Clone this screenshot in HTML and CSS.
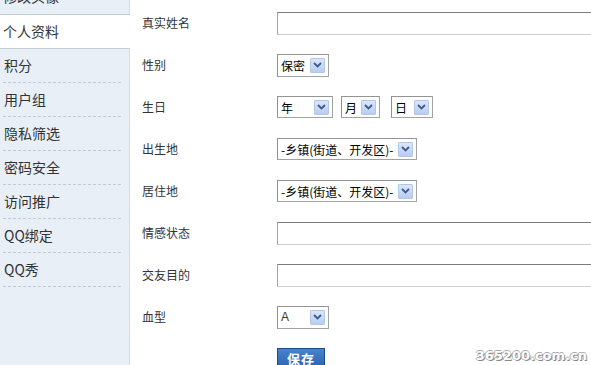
FILE: index.html
```html
<!DOCTYPE html>
<html lang="zh-CN">
<head>
    <meta charset="utf-8">
    <title>个人资料</title>
    <link rel="stylesheet" href="styles.css">
</head>

<body>
    <aside class="side">
        <ul class="menu">
            <li class="top">修改头像</li>
            <li class="valgt">个人资料</li>
            <li>积分</li>
            <li>用户组</li>
            <li>隐私筛选</li>
            <li>密码安全</li>
            <li>访问推广</li>
            <li>QQ绑定</li>
            <li>QQ秀</li>
        </ul>
    </aside>

    <main class="form">
        <div class="row">
            <span class="label">真实姓名</span>
            <input class="text" type="text">
        </div>
        <div class="row">
            <span class="label">性别</span>
            <div class="select w52 tall"><span class="val">保密</span><span class="arrow"><svg width="9" height="6" viewBox="0 0 9 6"><path d="M1 1 L4.5 4.5 L8 1" fill="none" stroke="#3f5a8c" stroke-width="1.8"/></svg></span></div>
        </div>
        <div class="row">
            <span class="label">生日</span>
            <div class="select w56 gap8"><span class="val">年</span><span class="arrow"><svg width="9" height="6" viewBox="0 0 9 6"><path d="M1 1 L4.5 4.5 L8 1" fill="none" stroke="#3f5a8c" stroke-width="1.8"/></svg></span></div>
            <div class="select w39 gap11"><span class="val">月</span><span class="arrow"><svg width="9" height="6" viewBox="0 0 9 6"><path d="M1 1 L4.5 4.5 L8 1" fill="none" stroke="#3f5a8c" stroke-width="1.8"/></svg></span></div>
            <div class="select w42"><span class="val">日</span><span class="arrow"><svg width="9" height="6" viewBox="0 0 9 6"><path d="M1 1 L4.5 4.5 L8 1" fill="none" stroke="#3f5a8c" stroke-width="1.8"/></svg></span></div>
        </div>
        <div class="row">
            <span class="label">出生地</span>
            <div class="select w140"><span class="val">-乡镇(街道、开发区)-</span><span class="arrow"><svg width="9" height="6" viewBox="0 0 9 6"><path d="M1 1 L4.5 4.5 L8 1" fill="none" stroke="#3f5a8c" stroke-width="1.8"/></svg></span></div>
        </div>
        <div class="row">
            <span class="label">居住地</span>
            <div class="select w140"><span class="val">-乡镇(街道、开发区)-</span><span class="arrow"><svg width="9" height="6" viewBox="0 0 9 6"><path d="M1 1 L4.5 4.5 L8 1" fill="none" stroke="#3f5a8c" stroke-width="1.8"/></svg></span></div>
        </div>
        <div class="row">
            <span class="label">情感状态</span>
            <input class="text" type="text">
        </div>
        <div class="row">
            <span class="label">交友目的</span>
            <input class="text" type="text">
        </div>
        <div class="row">
            <span class="label">血型</span>
            <div class="select w52 tall"><span class="val latin">A</span><span class="arrow"><svg width="9" height="6" viewBox="0 0 9 6"><path d="M1 1 L4.5 4.5 L8 1" fill="none" stroke="#3f5a8c" stroke-width="1.8"/></svg></span></div>
        </div>
        <div class="row">
            <span class="label"></span>
            <button class="save">保存</button>
        </div>
    </main>

    <div class="mark">365200.com.cn</div>
</body>
</html>
```

FILE: styles.css
```css
html,
body {
    margin: 0;
    height: 100%;
    overflow: hidden;
}

body {
    display: flex;
    background-color: #fff;
    font-family: "Noto Sans CJK SC", "Liberation Sans", sans-serif;
    color: #333;
}

.side {
    width: 129px;
    flex-shrink: 0;
    background-color: #e8eff7;
    border-right: 1px solid #d3dde8;
}

.menu {
    list-style: none;
    margin: -20px 0 0 0;
    padding: 0;
}

.menu li {
    height: 33px;
    line-height: 33px;
    font-size: 14px;
    margin: 0 8px 0 3px;
    padding-left: 1px;
    border-bottom: 1px dashed #c4cad2;
}

.menu .top {
    height: 34px;
}

.menu .top,
.menu .valgt {
    margin: 0 -1px 0 0;
    padding-left: 3px;
    border-bottom: 1px solid #c5ccd4;
}

.menu .valgt {
    background-color: #fff;
}

.form {
    flex: 1;
    padding: 2px 0 0 12px;
}

.row {
    display: flex;
    align-items: center;
    height: 42px;
}

.label {
    width: 135px;
    flex-shrink: 0;
    font-size: 12px;
    color: #333;
    margin-top: -2px;
}

.text {
    box-sizing: border-box;
    width: 340px;
    height: 23px;
    margin: 0;
    padding: 0;
    border: 1px solid;
    border-color: #7b7b7b #c9c9c9 #cfcfcf #a3a3a3;
    flex-shrink: 0;
}

.select {
    box-sizing: border-box;
    display: flex;
    align-items: center;
    height: 22px;
    border: 1px solid #a2a2a2;
    border-top-color: #949494;
    border-left-color: #909090;
    padding: 0 3px 0 3px;
    background-color: #fff;
    font-size: 12px;
    color: #000;
}

.select.tall {
    height: 23px;
}

.val {
    flex: 1;
    white-space: nowrap;
}

.latin {
    font-family: "Liberation Sans", sans-serif;
    font-size: 12px;
    color: #333;
}

.arrow {
    width: 13px;
    height: 13px;
    display: flex;
    align-items: center;
    justify-content: center;
    border: 1px solid #b3c6e6;
    border-radius: 1px;
    background: linear-gradient(#dbe6fb, #b9cdf1);
}

.w52 { width: 52px; }
.w56 { width: 56px; }
.w39 { width: 39px; }
.w42 { width: 42px; }
.w140 { width: 140px; }
.gap8 { margin-right: 8px; }
.gap11 { margin-right: 11px; }

.save {
    width: 48px;
    height: 22px;
    padding: 0;
    border: 1px solid #1c4c8f;
    background: linear-gradient(#4a83cc, #2861ad);
    color: #fff;
    font-family: "Noto Sans CJK SC", sans-serif;
    font-size: 13px;
    font-weight: bold;
    letter-spacing: 1px;
    line-height: 18px;
}

.mark {
    position: absolute;
    right: 4px;
    bottom: 2px;
    font-family: "DejaVu Sans", sans-serif;
    font-weight: bold;
    font-size: 13px;
    color: #fff;
    text-shadow: 1px 1px 0 #888, -1px 0 0 #aaa, 0 -1px 0 #aaa;
}
```
